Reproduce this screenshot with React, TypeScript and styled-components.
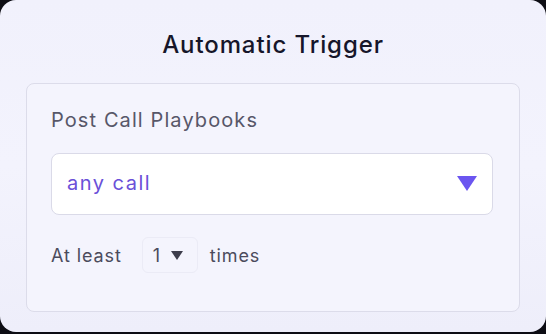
import React from 'react'
import styled, { createGlobalStyle } from 'styled-components'

const Global = createGlobalStyle`
  html, body {
    margin: 0;
    padding: 0;
    background: #0d0d14;
  }
  body {
    font-family: Inter, "Noto Sans", sans-serif;
  }
`

const Card = styled.div`
  width: 546px;
  height: 332px;
  box-sizing: border-box;
  border-radius: 16px;
  background: linear-gradient(180deg, #f1f1fc 0%, #f3f3fd 50%, #eeeefa 100%);
  display: flex;
  flex-direction: column;
  padding: 0 26px 20px 26px;
`

const Title = styled.div`
  height: 83px;
  display: flex;
  align-items: center;
  justify-content: center;
  box-sizing: border-box;
  padding-top: 6px;
  font-size: 24px;
  font-weight: 500;
  color: #16162a;
  letter-spacing: 0.9px;
`

const Panel = styled.div`
  flex: 1;
  border: 1px solid #dcdcea;
  border-radius: 8px;
  background: #f4f4fd;
  padding: 23px 26px 0 24px;
  display: flex;
  flex-direction: column;
`

const Label = styled.div`
  font-size: 20px;
  letter-spacing: 1.1px;
  color: #575769;
  line-height: 26px;
`

const Select = styled.div`
  margin-top: 20px;
  height: 62px;
  box-sizing: border-box;
  background: #ffffff;
  border: 1px solid #dadae8;
  border-radius: 8px;
  display: flex;
  align-items: center;
  justify-content: space-between;
  padding: 0 15px 2px 15px;
`

const Value = styled.span`
  font-size: 20px;
  letter-spacing: 1.5px;
  color: #6a50d8;
`

const Arrow = styled.span<{ $size: number; $color: string }>`
  width: 0;
  height: 0;
  border-left: ${p => p.$size / 2}px solid transparent;
  border-right: ${p => p.$size / 2}px solid transparent;
  border-top: ${p => p.$size * 0.78}px solid ${p => p.$color};
`

const Row = styled.div`
  margin-top: 22px;
  display: flex;
  align-items: center;
  font-size: 18px;
  letter-spacing: 0.9px;
  color: #4b4b5c;
`

const Count = styled.div`
  height: 36px;
  width: 56px;
  box-sizing: border-box;
  padding: 0 0 0 10px;
  margin: 0 12px 0 20px;
  border: 1px solid #ebebf6;
  border-radius: 6px;
  display: flex;
  align-items: center;
  gap: 10px;
`

const App = () => {
  return (
    <>
      <Global />
      <Card>
        <Title>Automatic Trigger</Title>
        <Panel>
          <Label>Post Call Playbooks</Label>
          <Select>
            <Value>any call</Value>
            <Arrow $size={20} $color="#6b55f0" />
          </Select>
          <Row>
            <span>At least</span>
            <Count>
              <span>1</span>
              <Arrow $size={12} $color="#3d3d4c" />
            </Count>
            <span>times</span>
          </Row>
        </Panel>
      </Card>
    </>
  )
}

export default App
